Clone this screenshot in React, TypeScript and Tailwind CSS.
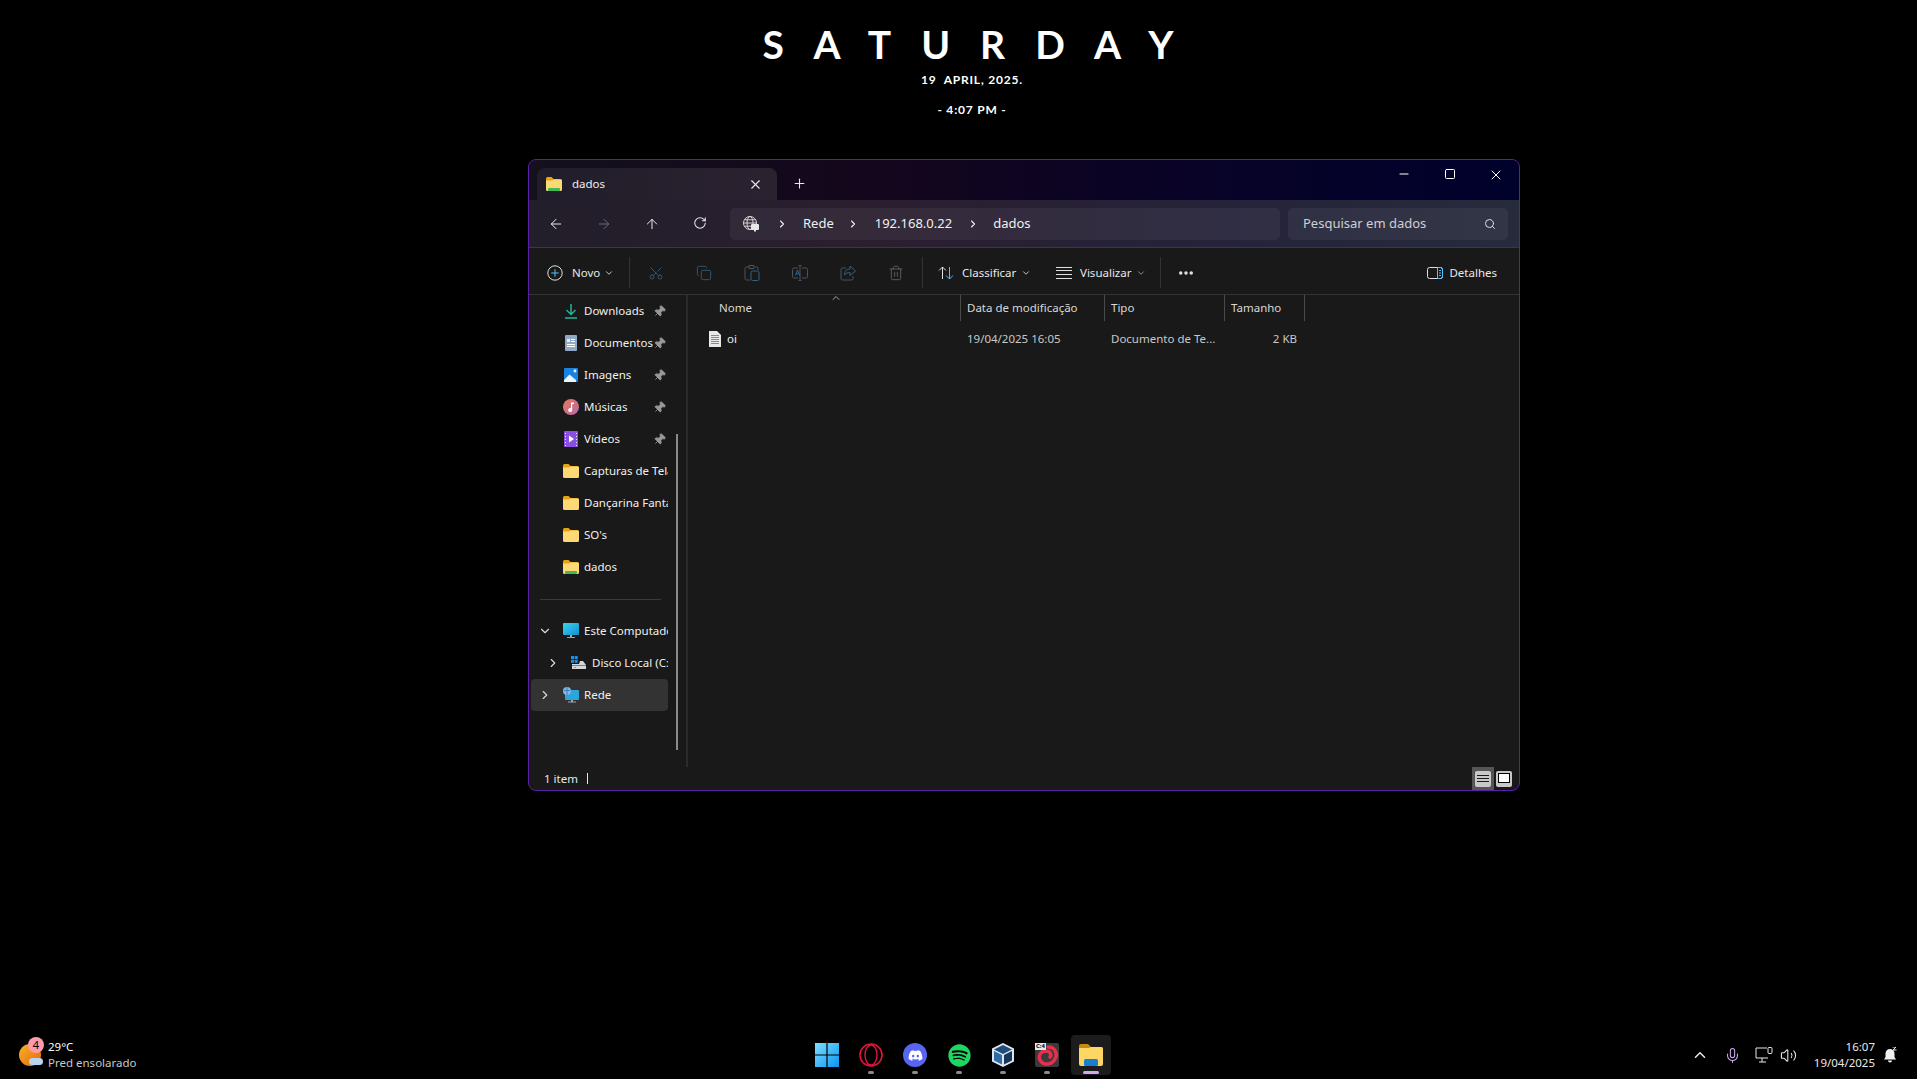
import {
  ArrowLeft, ArrowRight, ArrowUp, ChevronDown, ChevronRight, ChevronUp, Copy, Ellipsis,
  Mic, Minus, Pin, Plus, RotateCw, Scissors, Search, Square, Trash2, Volume2, X,
} from 'lucide-react';
import { FaDiscord, FaSpotify } from 'react-icons/fa';
import type { ReactNode } from 'react';

function FolderIcon({ green = false }: { green?: boolean }) {
  return (
    <svg width="16" height="14" viewBox="0 0 16 14" className="shrink-0">
      <path d="M0 1.5A1.5 1.5 0 0 1 1.5 0h4l2 2h7A1.5 1.5 0 0 1 16 3.5V5H0z" fill="#e6a412" />
      <path d="M0 3.500h6l1.500-1H14.500A1.500 1.500 0 0 1 16 4v8.500a1.500 1.500 0 0 1-1.500 1.500h-13A1.500 1.500 0 0 1 0 12.500z" fill="#fcd975" />
      {green && <rect x="2" y="11" width="12" height="3" rx="1" fill="#3fb950" />}
    </svg>
  );
}

function DownloadIcon() {
  return (
    <svg width="16" height="16" viewBox="0 0 16 16" fill="none" stroke="#21b59b" strokeWidth="1.5">
      <path d="M8 1v10M3.500 7 8 11.500 12.500 7M2 15h12" />
    </svg>
  );
}

function DocsIcon() {
  return (
    <svg width="16" height="16" viewBox="0 0 16 16">
      <rect x="2" y="0" width="12" height="16" rx="1" fill="#8fa9c6" />
      <path d="M8 4h4v1H8zM8 6h4v1H8zM4 9h8v1H4zM4 11h8v1H4z" fill="#fff" />
      <rect x="4" y="4" width="3" height="3" fill="#e5edf6" />
    </svg>
  );
}

function PicturesIcon() {
  return (
    <svg width="16" height="16" viewBox="0 0 16 16">
      <rect x="1" y="1" width="14" height="14" rx="1" fill="#1784e3" />
      <path d="M1 13 6.500 7.500 13 13v2H1z" fill="#eaf5ff" />
      <circle cx="12" cy="4" r="1.400" fill="#fff" />
    </svg>
  );
}

function MusicIcon() {
  return (
    <svg width="16" height="16" viewBox="0 0 16 16">
      <defs>
        <linearGradient id="mus" x1="0" y1="0" x2="1" y2="1">
          <stop offset="0" stopColor="#e8795a" />
          <stop offset="1" stopColor="#b868a8" />
        </linearGradient>
      </defs>
      <circle cx="8" cy="8" r="8" fill="url(#mus)" />
      <path d="M8 3.500h3V5H9.200v6a2 2 0 1 1-1.200-1.800z" fill="#fff" />
    </svg>
  );
}

function VideoIcon() {
  return (
    <svg width="16" height="16" viewBox="0 0 16 16">
      <rect x="1" y="0" width="14" height="16" rx="1" fill="#8a4fe0" />
      <path d="M2 2h1v1H2zM2 5h1v1H2zM2 8h1v1H2zM2 11h1v1H2zM2 14h1v1H2zM13 2h1v1h-1zM13 5h1v1h-1zM13 8h1v1h-1zM13 11h1v1h-1zM13 14h1v1h-1z" fill="#efe6ff" />
      <path d="M6 4.500 11 8l-5 3.500z" fill="#fff" />
    </svg>
  );
}

function MonitorIcon() {
  return (
    <svg width="16" height="16" viewBox="0 0 16 16">
      <defs>
        <linearGradient id="mon" x1="0" y1="0" x2="1" y2="1">
          <stop offset="0" stopColor="#3fd0ec" />
          <stop offset="1" stopColor="#0f8fd0" />
        </linearGradient>
      </defs>
      <rect x="0" y="0" width="16" height="12" rx="1" fill="url(#mon)" />
      <path d="M7 12h2v2h3v1H4v-1h3z" fill="#9aa5ad" />
    </svg>
  );
}

function DiskIcon() {
  return (
    <svg width="16" height="14" viewBox="0 0 16 14">
      <path d="M0 0h3v3H0zM3.700 0h3v3h-3zM0 3.700h3v3H0zM3.700 3.700h3v3h-3z" fill="#1e90e8" />
      <path d="M1 8h7l1-3h3l3 4v4H1z" fill="#d6d6d6" />
      <rect x="1" y="9" width="14" height="1" fill="#808080" />
      <rect x="3" y="11" width="2" height="1" fill="#3fd04f" />
    </svg>
  );
}

function NetworkIcon() {
  return (
    <svg width="16" height="16" viewBox="0 0 16 16">
      <rect x="2" y="3" width="14" height="10" rx="1" fill="#2aa6dc" />
      <path d="M8 13h2v1.500h3v1H5v-1h3z" fill="#9aa5ad" />
      <circle cx="4" cy="4" r="4" fill="#7fb8e8" />
      <path d="M1 3h6v1H1zM3.500 0h1v8h-1z" fill="#3d7fc2" />
    </svg>
  );
}

function FileIcon() {
  return (
    <svg width="12" height="16" viewBox="0 0 12 16" className="shrink-0">
      <path d="M0 0h8l4 4v12H0z" fill="#e8e8e8" />
      <path d="M2 4h8v1H2zM2 6h8v1H2zM2 8h8v1H2zM2 10h8v1H2zM2 12h8v1H2z" fill="#8a8a8a" />
    </svg>
  );
}

function NavLocationIcon() {
  return (
    <svg width="16" height="16" viewBox="0 0 16 16" fill="none" stroke="#d8d8d8" strokeWidth="1">
      <circle cx="7" cy="7" r="6.500" />
      <ellipse cx="7" cy="7" rx="3" ry="6.500" />
      <path d="M.5 7h13M1.500 3.800h11M1.500 10.200h11" />
      <rect x="8" y="8" width="8" height="6" rx="1" fill="#e8e8e8" stroke="none" />
      <path d="M11 14h2v1.500h-2z" fill="#e8e8e8" stroke="none" />
    </svg>
  );
}

function PasteIcon() {
  return (
    <svg width="16" height="16" viewBox="0 0 16 16" fill="none" strokeWidth="1">
      <path d="M5 2H2.500A1.500 1.500 0 0 0 1 3.500v10A1.500 1.500 0 0 0 2.500 15H6M11 2h1.500A1.500 1.500 0 0 1 14 3.500V5M5 .5h5v3H5z" stroke="#4a5560" />
      <rect x="7" y="6" width="8" height="9.500" rx="1.500" stroke="#2f6488" />
    </svg>
  );
}

function RenameIcon() {
  return (
    <svg width="16" height="16" viewBox="0 0 16 16" fill="none" stroke="#4a5560" strokeWidth="1">
      <path d="M6 3H2a1.500 1.500 0 0 0-1.500 1.500v7A1.500 1.500 0 0 0 2 13h4M10 3h4a1.500 1.500 0 0 1 1.500 1.500v7A1.500 1.500 0 0 1 14 13h-4" />
      <path d="M8 1v14M6.500 .5h3M6.500 15.500h3" />
      <path d="M3.500 10.500 5.500 5l2 5.500M4.200 8.800h2.600" stroke="#2f6488" />
    </svg>
  );
}

function ShareIcon() {
  return (
    <svg width="16" height="16" viewBox="0 0 16 16" fill="none" strokeWidth="1">
      <path d="M6 3H2.500A1.500 1.500 0 0 0 1 4.500v9A1.500 1.500 0 0 0 2.500 15h9a1.500 1.500 0 0 0 1.500-1.500V11" stroke="#4a5560" />
      <path d="M10 1v3C7 4 4.500 6 4.500 10 6 8 8 7.500 10 7.500v3L15.500 6z" stroke="#2f6488" />
    </svg>
  );
}

function SortIcon() {
  return (
    <svg width="16" height="16" viewBox="0 0 16 16" fill="none" strokeWidth="1">
      <path d="M4.500 14V2M1 5.500 4.500 2 8 5.500" stroke="#e0e0e0" />
      <path d="M11.500 2v12M8 10.500l3.500 3.500 3.500-3.500" stroke="#4cc2ff" />
    </svg>
  );
}

function ViewLinesIcon() {
  return (
    <svg width="16" height="12" viewBox="0 0 16 12" stroke="#e0e0e0" strokeWidth="1">
      <path d="M0 .5h16M0 3.500h16M0 7.500h16M0 11.500h16" />
    </svg>
  );
}

function DetailsIcon() {
  return (
    <svg width="16" height="14" viewBox="0 0 16 14" fill="none" strokeWidth="1">
      <rect x=".5" y="1.500" width="15" height="11" rx="2" stroke="#e0e0e0" />
      <path d="M10.500 1.500H13.500a2 2 0 0 1 2 2v7a2 2 0 0 1-2 2h-3z" stroke="#4cc2ff" />
      <path d="M12 4.500h2M12 7h2M12 9.500h2" stroke="#4cc2ff" />
    </svg>
  );
}

function NovoIcon() {
  return (
    <svg width="16" height="16" viewBox="0 0 16 16" fill="none" strokeWidth="1">
      <circle cx="8" cy="8" r="7.200" stroke="#e0e0e0" />
      <path d="M8 4.200v7.600M4.200 8h7.600" stroke="#4cc2ff" />
    </svg>
  );
}

function WindowsLogo() {
  return (
    <svg width="24" height="24" viewBox="0 0 24 24">
      <defs>
        <linearGradient id="win" x1="0" y1="0" x2="1" y2="1">
          <stop offset="0" stopColor="#7ee0ff" />
          <stop offset="1" stopColor="#0a94f0" />
        </linearGradient>
      </defs>
      <path d="M0 0h11.400v11.400H0zM12.600 0H24v11.400H12.600zM0 12.600h11.400V24H0zM12.600 12.600H24V24H12.600z" fill="url(#win)" />
    </svg>
  );
}

function OperaLogo() {
  return (
    <svg width="24" height="24" viewBox="0 0 24 24" fill="none" stroke="#e0143c">
      <circle cx="12" cy="12" r="11" strokeWidth="1.600" />
      <ellipse cx="12" cy="12" rx="6" ry="10" strokeWidth="1.400" />
    </svg>
  );
}

function VBoxLogo() {
  return (
    <svg width="24" height="26" viewBox="0 0 24 26">
      <path d="M12 1 23 6.500v13L12 25 1 19.500v-13z" fill="#dfe6ee" />
      <path d="M12 3 21 7.500 12 12 3 7.500z" fill="#1f4e7d" />
      <path d="M3 9 11 13v9.500L3 18.500z" fill="#2f6ca8" />
      <path d="M21 9 13 13v9.500l8-4z" fill="#14375a" />
    </svg>
  );
}

function DebianTile() {
  return (
    <div className="relative h-[24px] w-[24px] rounded-[2px] bg-[#3a3a3e]">
      <svg width="24" height="24" viewBox="0 0 24 24" fill="none" stroke="#e8304c" strokeWidth="3.500" strokeLinecap="round">
        <path d="M13 4C20 4 23 11 20 16 17 22 8 23 5 17 3 12 6 8 11 8 15 8 17 12 15 14" />
      </svg>
      <span className="absolute top-0 left-0 bg-[#e8e8e8] px-[1px] text-[6px] leading-[7px] font-bold text-black">C:4</span>
    </div>
  );
}

function ExplorerLogo() {
  return (
    <svg width="24" height="22" viewBox="0 0 24 22">
      <path d="M0 2a2 2 0 0 1 2-2h7l3 3h10a2 2 0 0 1 2 2v3H0z" fill="#c98a10" />
      <path d="M0 4h10l2-1h10a2 2 0 0 1 2 2v15a2 2 0 0 1-2 2H2a2 2 0 0 1-2-2z" fill="#fdd663" />
      <rect x="5" y="15" width="14" height="7" rx="1.500" fill="#1a7fd0" />
    </svg>
  );
}

function SideRow({ icon, label, pin = false, chevron, indent = false, selected = false }: {
  icon: ReactNode;
  label: string;
  pin?: boolean;
  chevron?: 'open' | 'closed';
  indent?: boolean;
  selected?: boolean;
}) {
  return (
    <div className={`flex h-[32px] w-[137px] items-center rounded-[4px] ${selected ? 'bg-[#333333]' : ''}`}>
      <div className={`${indent ? 'w-[40px] pl-[15px]' : 'w-[32px] pl-[7px]'} shrink-0`}>
        {chevron === 'open' && <ChevronDown size={14} strokeWidth={2} className="text-[#d8d8d8]" />}
        {chevron === 'closed' && <ChevronRight size={14} strokeWidth={2} className="text-[#d8d8d8]" />}
      </div>
      <div className="flex w-[16px] shrink-0 justify-center">{icon}</div>
      <span className="ml-[5px] min-w-0 flex-1 overflow-hidden text-[11.5px] whitespace-nowrap text-[#f0f0f0]">{label}</span>
      {pin && <Pin size={13} fill="#9a9a9a" strokeWidth={1.5} className="mr-[2px] shrink-0 rotate-45 text-[#9a9a9a]" />}
    </div>
  );
}

function ToolIcon({ children }: { children: ReactNode }) {
  return <div className="flex w-[48px] shrink-0 items-center justify-center text-[#4a5560]">{children}</div>;
}

function ToolDivider() {
  return <div className="h-[31px] w-px shrink-0 bg-[#333333]" />;
}

function HeaderCell({ label, width }: { label: string; width: string }) {
  return (
    <div className={`flex h-[26px] shrink-0 items-center border-r border-[#4a4a4a] pl-[6px] text-[11.5px] text-[#d8d8d8] ${width}`}>
      {label}
    </div>
  );
}

function TaskIcon({ children, dot = true, active = false }: { children: ReactNode; dot?: boolean; active?: boolean }) {
  return (
    <div className={`relative flex h-[40px] w-[40px] items-center justify-center rounded-[4px] ${active ? 'bg-[#1c1c1c]' : ''}`}>
      {children}
      {dot && <div className={`absolute bottom-[1px] h-[3px] rounded-full ${active ? 'w-[16px] bg-[#d0a8f0]' : 'w-[6px] bg-[#8a8a8a]'}`} />}
    </div>
  );
}

export default function App() {
  const font = { fontFamily: '"Noto Sans", "Open Sans", sans-serif' };

  return (
    <div className="relative h-[1079px] w-[1917px] overflow-hidden bg-black text-white" style={font}>
      {/* desktop clock widget */}
      <div className="ml-[27px] flex flex-col items-center pt-[18px]">
        <div className="pl-[22px] font-['Lato',sans-serif] text-[39px] leading-[52px] font-bold tracking-[30px] text-white">SATURDAY</div>
        <div className="mt-[2px] font-['Lato',sans-serif] text-[12px] leading-[16px] font-bold tracking-[0.8px]">19&nbsp; APRIL, 2025.</div>
        <div className="mt-[14px] font-['Lato',sans-serif] text-[12px] leading-[16px] font-bold tracking-[0.8px]">- 4:07 PM -</div>
      </div>

      {/* explorer window */}
      <div className="absolute top-[159px] left-[528px] flex h-[632px] w-[992px] flex-col overflow-hidden rounded-[8px] border border-[#5a1fa8] bg-[#191919]">
        <div className="flex h-[40px] shrink-0 items-end bg-[linear-gradient(90deg,#13111c,#14061c_35%,#0a0326_62%,#00012c)] pl-[8px]">
          <div className="flex h-[32px] w-[240px] items-center rounded-t-[8px] bg-[linear-gradient(90deg,#211d2a,#2b2230)] pr-[14px] pl-[9px]">
            <FolderIcon green />
            <span className="ml-[10px] flex-1 text-[11.5px] text-[#f0f0f0]">dados</span>
            <X size={15} strokeWidth={1.75} className="text-[#e8e8e8]" />
          </div>
          <div className="flex h-[32px] w-[45px] items-center justify-center pb-[1px]">
            <Plus size={15} strokeWidth={1.75} className="text-[#e8e8e8]" />
          </div>
          <div className="ml-auto flex h-[40px] items-start pt-[7px]">
            <div className="flex w-[46px] justify-center"><Minus size={14} strokeWidth={1.75} /></div>
            <div className="flex w-[46px] justify-center"><Square size={12} strokeWidth={2} className="mt-[1px]" /></div>
            <div className="flex w-[46px] justify-center"><X size={16} strokeWidth={1.5} /></div>
          </div>
        </div>

        <div className="flex h-[48px] shrink-0 items-center border-b border-[#3a3a3a] bg-[linear-gradient(90deg,#221e2a,#2a1f2f_35%,#25233a_70%,#272b3c)]">
          <div className="flex w-[201px] shrink-0 pl-[3px] text-[#eaeaea]">
            <div className="flex w-[48px] justify-center"><ArrowLeft size={16} strokeWidth={1.5} /></div>
            <div className="flex w-[48px] justify-center text-[#6c6c74]"><ArrowRight size={16} strokeWidth={1.5} /></div>
            <div className="flex w-[48px] justify-center"><ArrowUp size={16} strokeWidth={1.5} /></div>
            <div className="flex w-[48px] justify-center"><RotateCw size={14} strokeWidth={1.75} /></div>
          </div>
          <div className="flex h-[32px] w-[550px] shrink-0 items-center rounded-[5px] bg-white/5 text-[13px] text-[#f0f0f0]">
            <div className="ml-[13px]"><NavLocationIcon /></div>
            <ChevronRight size={12} strokeWidth={2.25} className="ml-[17px]" />
            <span className="ml-[15px]">Rede</span>
            <ChevronRight size={12} strokeWidth={2.25} className="ml-[13px]" />
            <span className="ml-[16px]">192.168.0.22</span>
            <ChevronRight size={12} strokeWidth={2.25} className="ml-[15px]" />
            <span className="ml-[14px]">dados</span>
          </div>
          <div className="ml-[8px] flex h-[32px] w-[220px] shrink-0 items-center justify-between rounded-[5px] bg-white/5 pr-[12px] pl-[15px] text-[13px] text-[#cfcfd4]">
            <span>Pesquisar em dados</span>
            <Search size={12} strokeWidth={2} className="text-[#e0e0e0]" />
          </div>
        </div>

        <div className="flex h-[47px] shrink-0 items-center border-b border-[#333333] pt-[3px] text-[11.5px] text-[#e8e8e8]">
          <div className="flex w-[100px] shrink-0 items-center pl-[18px]">
            <NovoIcon />
            <span className="ml-[9px]">Novo</span>
            <ChevronDown size={10} strokeWidth={2} className="ml-[4px]" />
          </div>
          <ToolDivider />
          <div className="ml-[2px] flex w-[290px] shrink-0">
            <ToolIcon><Scissors size={16} strokeWidth={1.5} className="-rotate-90 text-[#2f5670]" /></ToolIcon>
            <ToolIcon><Copy size={16} strokeWidth={1.5} className="text-[#2f5670]" /></ToolIcon>
            <ToolIcon><PasteIcon /></ToolIcon>
            <ToolIcon><RenameIcon /></ToolIcon>
            <ToolIcon><ShareIcon /></ToolIcon>
            <ToolIcon><Trash2 size={16} strokeWidth={1.5} className="text-[#5a5a5a]" /></ToolIcon>
          </div>
          <ToolDivider />
          <div className="flex w-[133px] shrink-0 items-center pl-[15px]">
            <SortIcon />
            <span className="ml-[8px]">Classificar</span>
            <ChevronDown size={10} strokeWidth={2} className="ml-[5px]" />
          </div>
          <div className="flex w-[104px] shrink-0 items-center">
            <ViewLinesIcon />
            <span className="ml-[8px]">Visualizar</span>
            <ChevronDown size={10} strokeWidth={2} className="ml-[5px] text-[#a0a0a0]" />
          </div>
          <ToolDivider />
          <div className="ml-[16px] flex"><Ellipsis size={18} strokeWidth={2.6} /></div>
          <div className="ml-auto flex items-center pr-[22px]">
            <DetailsIcon />
            <span className="ml-[6px]">Detalhes</span>
          </div>
        </div>

        <div className="flex min-h-0 flex-1">
          <div className="relative flex w-[159px] shrink-0 flex-col border-r-2 border-[#2b2b2b] pl-[2px]">
            <div>
              <SideRow icon={<DownloadIcon />} label="Downloads" pin />
              <SideRow icon={<DocsIcon />} label="Documentos" pin />
              <SideRow icon={<PicturesIcon />} label="Imagens" pin />
              <SideRow icon={<MusicIcon />} label="Músicas" pin />
              <SideRow icon={<VideoIcon />} label="Vídeos" pin />
              <SideRow icon={<FolderIcon />} label="Capturas de Tela" />
              <SideRow icon={<FolderIcon />} label="Dançarina Fantasma" />
              <SideRow icon={<FolderIcon />} label="SO's" />
              <SideRow icon={<FolderIcon green />} label="dados" />
            </div>
            <div className="mt-[16px] ml-[9px] h-px w-[121px] bg-[#3a3a3a]" />
            <div className="mt-[15px]">
              <SideRow icon={<MonitorIcon />} label="Este Computador" chevron="open" />
              <SideRow icon={<DiskIcon />} label="Disco Local (C:)" chevron="closed" indent />
              <SideRow icon={<NetworkIcon />} label="Rede" chevron="closed" selected />
            </div>
            <div className="absolute top-[139px] left-[147px] h-[316px] w-[2px] bg-[#8a8a8a]" />
          </div>

          <div className="min-w-0 flex-1">
            <div className="relative flex">
              <div className="flex h-[26px] w-[273px] shrink-0 items-center border-r border-[#4a4a4a] pl-[31px] text-[11.5px] text-[#d8d8d8]">Nome</div>
              <ChevronUp size={12} strokeWidth={1.75} className="absolute top-[-3px] left-[142px] text-[#b8b8b8]" />
              <HeaderCell label="Data de modificação" width="w-[144px]" />
              <HeaderCell label="Tipo" width="w-[120px]" />
              <HeaderCell label="Tamanho" width="w-[80px]" />
            </div>
            <div className="mt-[3px] flex h-[30px] items-center text-[11.5px] text-[#c8c8c8]">
              <div className="flex w-[273px] shrink-0 items-center pl-[21px]">
                <FileIcon />
                <span className="ml-[6px] text-[#f0f0f0]">oi</span>
              </div>
              <span className="w-[144px] shrink-0 pl-[6px]">19/04/2025 16:05</span>
              <span className="w-[120px] shrink-0 pl-[6px]">Documento de Te...</span>
              <span className="w-[80px] shrink-0 pr-[8px] text-right">2 KB</span>
            </div>
          </div>
        </div>

        <div className="flex h-[23px] shrink-0 items-center pl-[15px] text-[11.5px] text-[#e8e8e8]">
          <span>1 item</span>
          <div className="ml-[9px] h-[11px] w-px bg-[#e8e8e8]" />
          <div className="ml-auto flex h-full items-center pr-[7px]">
            <div className="flex h-[23px] w-[22px] items-center justify-center bg-[#555555]">
              <div className="flex h-[16px] w-[16px] flex-col justify-center gap-[2px] rounded-[2px] bg-[#c8c8c8] px-[2px]">
                <div className="h-px bg-[#1a1a1a]" />
                <div className="h-px bg-[#1a1a1a]" />
                <div className="h-px bg-[#1a1a1a]" />
              </div>
            </div>
            <div className="ml-[2px] flex h-[16px] w-[16px] flex-col rounded-[2px] bg-[#c8c8c8] p-[2px]">
              <div className="h-[10px] border border-black bg-white" />
            </div>
          </div>
        </div>
      </div>

      {/* taskbar */}
      <div className="absolute inset-x-0 bottom-0 flex h-[48px] items-center justify-between">
        <div className="flex items-center pl-[19px]">
          <div className="relative h-[22px] w-[22px]">
            <div className="h-[22px] w-[22px] rounded-full bg-[linear-gradient(135deg,#f5b52a,#e8650e)]" />
            <div className="absolute right-[-2px] bottom-[1px] h-[7px] w-[14px] rounded-full bg-[#b8d4f0]" />
            <div className="absolute top-[-7px] left-[9px] flex h-[16px] w-[16px] items-center justify-center rounded-full bg-[#ff9aa8] text-[11px] text-black">4</div>
          </div>
          <div className="ml-[7px] text-[11.5px] leading-[16px]">
            <div className="text-white">29°C</div>
            <div className="text-[#c8c8c8]">Pred ensolarado</div>
          </div>
        </div>

        <div className="absolute left-[807px] flex gap-[4px]">
          <TaskIcon dot={false}><WindowsLogo /></TaskIcon>
          <TaskIcon><OperaLogo /></TaskIcon>
          <TaskIcon>
            <div className="flex h-[24px] w-[24px] items-center justify-center rounded-full bg-[#5865f2]"><FaDiscord size={15} className="text-white" /></div>
          </TaskIcon>
          <TaskIcon><FaSpotify size={23} className="text-[#1ed760]" /></TaskIcon>
          <TaskIcon><VBoxLogo /></TaskIcon>
          <TaskIcon><DebianTile /></TaskIcon>
          <TaskIcon active><ExplorerLogo /></TaskIcon>
        </div>

        <div className="flex items-center pr-[20px] text-[#e8e8e8]">
          <ChevronUp size={18} strokeWidth={2} />
          <Mic size={17} strokeWidth={1.5} className="ml-[15px] text-[#c9a8e8]" />
          <svg width="18" height="16" viewBox="0 0 18 16" fill="none" stroke="#e8e8e8" className="ml-[14px]">
            <path d="M12 1H1v10h12M7 11v4M4 15h7" />
            <rect x="13" y=".5" width="4" height="6" rx="1" />
          </svg>
          <Volume2 size={17} strokeWidth={1.5} className="ml-[7px]" />
          <div className="ml-[17px] text-right text-[11.5px] leading-[16px]">
            <div>16:07</div>
            <div>19/04/2025</div>
          </div>
          <svg width="14" height="16" viewBox="0 0 14 16" className="ml-[8px]">
            <path d="M7 2a4.500 4.500 0 0 0-4.500 4.500V10L1 12.500h12L11.500 10V6.500A4.500 4.500 0 0 0 7 2zM5 13.500h4a2 2 0 0 1-4 0z" fill="#f0f0f0" />
            <path d="M9.500 0H13L10 3h3.500" stroke="#f0f0f0" strokeWidth="1" fill="none" />
          </svg>
        </div>
      </div>
    </div>
  );
}
